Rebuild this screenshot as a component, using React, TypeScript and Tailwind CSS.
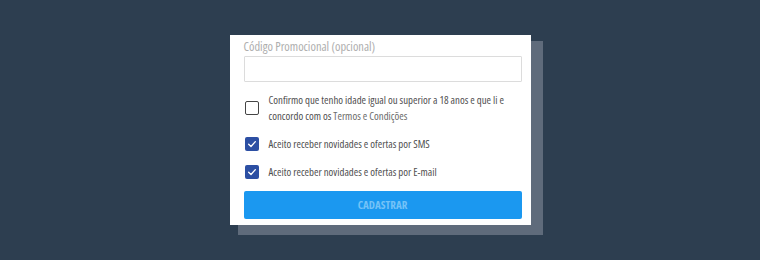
import React from 'react';

function CheckRow({ checked, children }: { checked: boolean; children: React.ReactNode }) {
  return (
    <label className="flex items-center gap-[10px] cursor-pointer">
      <span
        className={
          checked
            ? 'w-[14px] h-[14px] ml-[1px] shrink-0 rounded-[2px] bg-[#2c4fa3] flex items-center justify-center'
            : 'w-[14px] h-[14px] ml-[1px] shrink-0 rounded-[2px] border-[1.5px] border-[#444] bg-white'
        }
      >
        {checked && (
          <svg viewBox="0 0 12 12" className="w-[10px] h-[10px]">
            <path d="M2 6.3 L4.8 9 L10 3.2" fill="none" stroke="white" strokeWidth="1.6" strokeLinecap="round" strokeLinejoin="round" />
          </svg>
        )}
      </span>
      <span className="text-[10.8px] leading-[16px] text-[#505050] whitespace-nowrap">{children}</span>
    </label>
  );
}

export default function App() {
  return (
    <div className="h-screen w-full bg-[#2d3e50] flex items-center justify-center font-['Open_Sans',sans-serif] font-stretch-condensed">
      <div className="w-[301px] bg-white pt-[4px] pb-[6px] pl-[14px] pr-[9px] shadow-[10px_8px_0_2px_#5f6b7b]">
        <div className="text-[12.4px] leading-[15px] text-[#aeaeae]">Código Promocional (opcional)</div>
        <input type="text" className="mt-[2px] w-full h-[26px] border border-[#dcdcdc] rounded-[1px] outline-none" />

        <div className="mt-[10px] flex flex-col gap-[12px]">
          <CheckRow checked={false}>
            Confirmo que tenho idade igual ou superior a 18 anos e que li e<br />
            concordo com os <span className="text-[#6b6b6b]">Termos e Condições</span>
          </CheckRow>
          <CheckRow checked>Aceito receber novidades e ofertas por SMS</CheckRow>
          <CheckRow checked>Aceito receber novidades e ofertas por E-mail</CheckRow>
        </div>

        <button className="mt-[11px] w-full h-[28px] bg-[#1b98f0] rounded-[2px] text-[11px] font-bold text-[#74c2f7] uppercase">
          Cadastrar
        </button>
      </div>
    </div>
  );
}
